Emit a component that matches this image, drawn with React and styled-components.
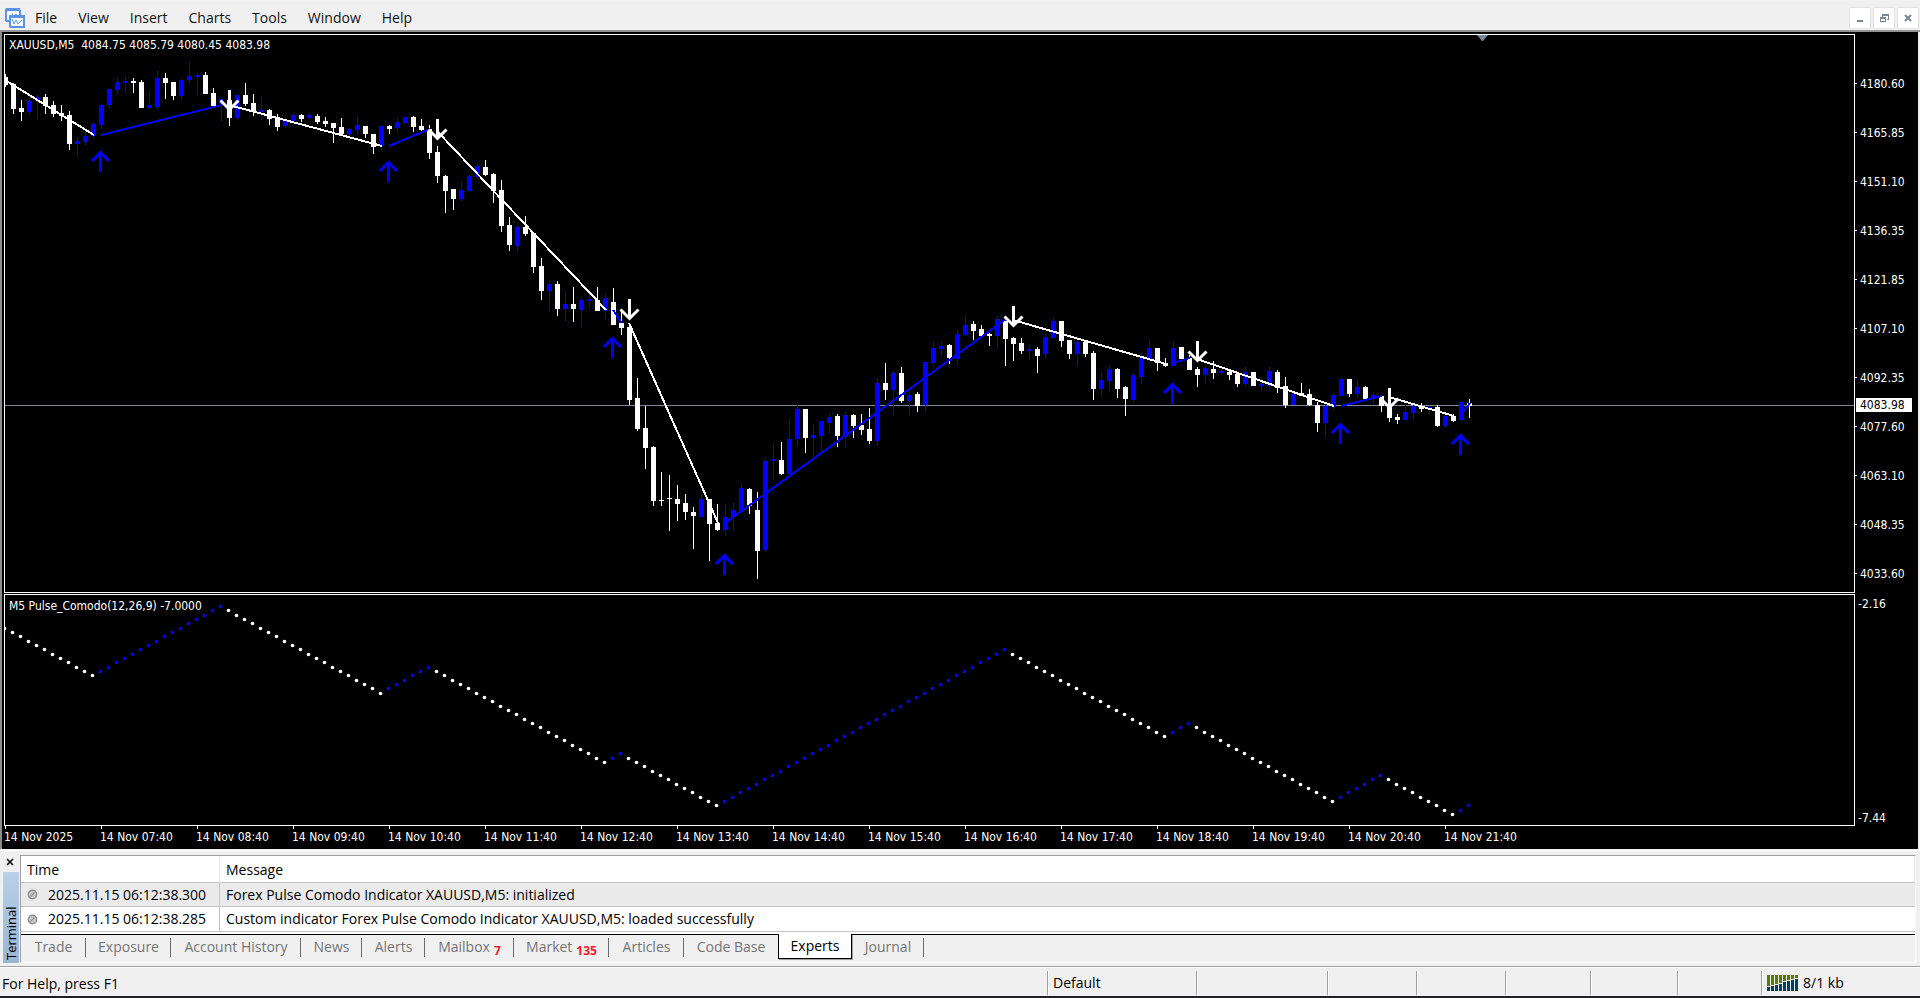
import React from "react";
import styled, { createGlobalStyle, css } from "styled-components";

const UI_FONT = `"Open Sans", "Noto Sans", sans-serif`;
const CHART_FONT = `"DejaVu Sans Condensed", "Noto Sans", sans-serif`;
const BULL = "#0000ff";
const BEAR = "#ffffff";
const SLATE = "#778899";

/* ---------- data ---------- */

const STEP = 8;
const TOP = 35;

// [isBull, high, bodyTop, bodyBottom, low]
const CANDLES = [
  [0,74,77,85,87],[0,83,84,109,114],[0,100,108,112,121],[1,96,101,112,114],[1,95,97,101,120],
  [0,94,97,106,114],[0,101,105,114,117],[0,105,113,116,121],[0,111,115,144,150],[1,137,141,144,157],
  [1,132,136,142,145],[1,122,124,136,138],[1,104,105,125,129],[1,89,89,105,108],[1,78,82,90,94],
  [1,77,81,83,93],[0,78,81,83,93],[0,80,82,108,108],[1,91,105,108,109],[1,71,78,107,109],
  [0,73,78,83,99],[0,82,82,96,100],[1,79,80,96,99],[1,62,76,80,83],[1,73,75,77,95],
  [0,72,75,94,94],[0,88,93,106,106],[1,99,99,104,121],[0,99,100,118,126],[1,95,95,118,120],
  [0,83,95,104,106],[0,94,103,112,116],[1,97,110,112,120],[0,109,110,119,125],[0,114,117,127,131],
  [1,117,121,126,128],[1,113,115,121,124],[0,114,115,119,122],[1,113,115,118,119],[0,114,116,122,124],
  [0,117,121,124,127],[0,123,123,128,143],[0,118,127,134,134],[1,128,129,134,143],[1,117,125,130,135],
  [0,126,126,134,138],[0,134,134,147,154],[1,126,126,146,150],[0,125,126,129,134],[1,118,122,128,133],
  [1,117,117,123,124],[0,116,117,127,132],[0,119,126,130,132],[0,125,129,153,159],[0,146,152,176,183],
  [0,175,176,191,213],[0,189,189,199,210],[1,182,190,199,201],[1,175,176,191,191],[1,164,166,177,177],
  [0,160,167,175,176],[0,173,174,191,203],[0,180,190,226,232],[0,217,225,245,251],[1,226,227,246,251],
  [0,216,227,234,236],[0,232,233,267,273],[0,258,266,291,300],[1,281,284,291,311],[0,281,284,309,316],
  [1,292,304,309,321],[0,287,304,309,322],[1,298,300,310,327],[1,289,299,301,308],[0,287,300,311,311],
  [1,294,298,311,319],[0,288,302,325,325],[0,312,323,328,335],[0,325,327,400,405],[0,378,398,429,431],
  [0,406,428,448,469],[0,446,447,501,506],[0,472,500,501,506],[0,475,498,499,531],[0,485,499,504,521],
  [0,494,503,512,520],[0,507,512,516,549],[1,494,499,517,517],[0,499,499,524,561],[0,504,523,530,531],
  [1,504,517,530,536],[1,503,510,517,530],[1,484,488,512,512],[0,488,489,506,514],[0,492,510,551,579],
  [1,458,461,550,552],[1,443,459,461,479],[0,442,460,474,475],[1,419,439,474,475],[1,405,409,439,446],
  [0,409,409,438,453],[1,424,435,438,457],[1,421,421,436,453],[1,414,417,423,433],[0,414,416,436,447],
  [1,412,415,437,447],[0,414,415,426,438],[0,414,425,430,435],[0,408,429,441,444],[1,378,383,441,446],
  [0,363,383,390,400],[1,371,373,390,415],[0,367,373,401,403],[1,392,395,401,416],[0,392,394,406,412],
  [1,362,362,405,411],[1,342,348,363,366],[1,342,346,349,355],[0,344,345,358,364],[1,330,334,359,365],
  [1,315,325,335,336],[0,321,324,331,340],[0,325,329,336,336],[0,333,334,336,346],[1,316,319,336,348],
  [0,319,321,339,366],[0,337,338,344,361],[0,338,343,351,354],[1,345,349,351,360],[0,347,349,356,373],
  [1,334,337,354,359],[1,318,321,338,338],[0,321,321,341,347],[0,340,340,354,359],[1,336,342,354,366],
  [0,342,342,354,357],[0,351,353,389,400],[1,373,380,389,397],[1,366,369,381,391],[0,368,369,389,398],
  [0,386,387,399,416],[1,373,375,400,402],[1,353,358,377,384],[1,340,348,360,361],[0,348,348,363,371],
  [0,358,363,366,367],[1,342,348,366,366],[0,347,347,359,360],[0,355,358,370,370],[0,367,369,375,387],
  [1,366,368,375,383],[0,361,369,373,379],[1,369,371,373,375],[0,370,372,375,380],[0,373,374,384,387],
  [1,367,372,384,386],[0,372,372,386,386],[1,377,384,386,391],[1,367,371,386,389],[0,370,372,388,393],
  [0,377,386,405,408],[1,392,394,405,405],[0,383,393,396,396],[0,389,394,405,406],[0,402,405,423,432],
  [1,404,406,423,435],[1,394,395,407,410],[1,377,379,396,396],[0,379,379,394,397],[1,380,387,394,398],
  [0,386,387,399,399],[1,392,395,399,403],[0,395,396,406,412],[0,400,406,418,422],[0,414,417,420,424],
  [1,402,412,420,420],[1,404,406,413,419],[0,403,406,409,412],[1,406,407,409,415],[0,405,407,426,427],
  [1,414,416,426,428],[0,414,416,421,422],[1,401,402,420,421],[0,399,403,406,418],
];

// [isBull, fromBar, fromY, toBar, toY]
const TRENDS = [
  [0,0,80,11,135],[1,12,135,27,105],[0,28,105,47,146],[1,48,146,53,129],[0,54,131,75,310],
  [1,76,310,77,323],[0,78,323,89,523],[1,90,523,125,319],[0,126,320,145,364],[1,146,363,148,358],
  [0,149,359,166,406],[1,167,406,172,396],[0,173,397,181,416],[1,182,415,183,403],
];

// [isBull, bar, topY]
const SIGNALS = [
  [1,12,150],[0,28,90],[1,48,160],[0,54,119],[1,76,336],[0,78,299],[1,90,553],
  [0,126,306],[1,146,382],[0,149,341],[1,167,422],[0,173,388],[1,182,433],
];

// bars at which the pulse line turns, with its level there
const PULSE_TURNS = [[0,0],[11,11],[27,-5],[47,15],[53,9],[75,31],[77,29],[89,41],[125,5],[145,25],[148,22],[166,40],[172,34],[181,43],[183,41]];

const PULSE = PULSE_TURNS.slice(1).reduce(
  (dots, [bar, level], i) => {
    const [startBar, startLevel] = PULSE_TURNS[i];
    const dir = Math.sign(level - startLevel);
    for (let b = startBar + 1; b <= bar; b += 1) {
      dots.push({ bar: b, level: startLevel + dir * (b - startBar), bull: dir < 0 });
    }
    return dots;
  },
  [{ bar: 0, level: 0, bull: false }]
);

const PRICES = ["4180.60","4165.85","4151.10","4136.35","4121.85","4107.10","4092.35","4077.60","4063.10","4048.35","4033.60"];
const TIMES = ["14 Nov 2025", ...Array.from({ length: 15 }, (_, i) => `14 Nov ${String(i + 7).padStart(2, "0")}:40`)];
const MENUS = ["File", "View", "Insert", "Charts", "Tools", "Window", "Help"];
const LOGS = [
  ["2025.11.15 06:12:38.300", "Forex Pulse Comodo Indicator XAUUSD,M5: initialized"],
  ["2025.11.15 06:12:38.285", "Custom indicator Forex Pulse Comodo Indicator XAUUSD,M5: loaded successfully"],
];
const TABS = [
  { label: "Trade", width: 65 },
  { label: "Exposure", width: 85 },
  { label: "Account History", width: 130 },
  { label: "News", width: 61 },
  { label: "Alerts", width: 63 },
  { label: "Mailbox", count: 7, width: 89 },
  { label: "Market", count: 135, width: 95 },
  { label: "Articles", width: 75 },
  { label: "Code Base", width: 94 },
  { label: "Experts", width: 74, active: true },
  { label: "Journal", width: 72 },
];
const PANES = [131, 89, 89, 85, 87, 84];

/* ---------- styles ---------- */

const GlobalStyle = createGlobalStyle`
  * { box-sizing: border-box; }
  body { margin: 0; background: #f0f0f0; font-family: ${UI_FONT}; }
  button { font: inherit; margin: 0; padding: 0; border: 0; background: none; }
`;

const Shell = styled.div`
  display: flex;
  flex-direction: column;
  height: 100vh;
  border-bottom: 2px solid #202026;
  background: #f0f0f0;
  color: #000;
  font-size: 14px;
`;

const MenuBar = styled.header`
  display: flex;
  flex: none;
  align-items: center;
  height: 32px;
  padding: 5px 1px 0 5px;
  border-top: 1px solid #f3f3f3;
  border-bottom: 2px solid #949494;
`;

const MenuList = styled.nav`
  display: flex;
  gap: 21px;
  margin-left: 10px;
  line-height: 20px;
`;

const MenuButton = styled.button`
  color: #111;
`;

const WindowButtons = styled.div`
  display: flex;
  gap: 2px;
  margin-left: auto;
`;

const WindowButton = styled.button`
  display: grid;
  place-items: center;
  width: 22px;
  height: 22px;
  border: 1px solid #e6e6e6;
  border-radius: 1px;
  background: #fff;
  color: ${SLATE};
`;

const ChartWindow = styled.main`
  flex: 1;
  display: grid;
  grid-template-columns: minmax(0, 1fr) 63px;
  grid-template-rows: minmax(0, 559fr) minmax(0, 233fr) 23px;
  min-height: 480px;
  margin-right: 2px;
  padding: 2px 0 0 2px;
  border-left: 2px solid #8c8c8c;
  background: #000;
  color: #fff;
  font-family: ${CHART_FONT};
  font-size: 12px;
  line-height: 14px;
`;

const Pane = styled.section`
  position: relative;
  overflow: hidden;
  border: 1px solid #fff;
  margin-top: ${(p) => (p.$second ? 1 : 0)}px;
`;

const PaneTitle = styled.h2`
  position: absolute;
  top: ${(p) => (p.$second ? 4 : 3)}px;
  left: 4px;
  margin: 0;
  font-size: 12px;
  font-weight: 400;
  white-space: pre;
`;

const Plot = styled.svg`
  position: absolute;
  inset: 0;
  width: 100%;
  height: 100%;
`;

const PriceScale = styled.aside`
  position: relative;
  overflow: hidden;
  padding-top: 25px;
`;

const PriceLabel = styled.div`
  display: flex;
  align-items: center;
  gap: 3px;
  height: 49px;

  &::before {
    content: "";
    width: 2px;
    height: 1px;
    background: #fff;
  }
`;

const PriceTag = styled.output`
  position: absolute;
  top: 364px;
  left: 1px;
  width: 56px;
  padding-left: 4px;
  background: #fff;
  color: #000;
`;

const PulseScale = styled.aside`
  display: flex;
  flex-direction: column;
  justify-content: space-between;
  padding: 4px 0 1px 3px;
`;

const TimeScale = styled.footer`
  display: flex;
  grid-column: 1 / -1;
  overflow: hidden;
`;

const TimeLabel = styled.div`
  flex: none;
  width: 96px;
  white-space: nowrap;

  &::before {
    content: "";
    display: block;
    width: 1px;
    height: 3px;
    margin: 0 0 1px 1px;
    background: #fff;
  }
`;

const Terminal = styled.section`
  display: flex;
  flex: none;
  margin-top: 1px;
  padding: 4px 4px 3px 3px;
  border-top: 1px solid #fff;
`;

const TerminalSide = styled.div`
  display: flex;
  flex-direction: column;
  width: 16px;
  margin-right: 1px;
`;

const CloseButton = styled.button`
  display: grid;
  place-items: center;
  width: 14px;
  height: 13px;
  margin-bottom: 4px;
`;

const TerminalTitle = styled.div`
  flex: 1;
  display: flex;
  align-items: center;
  background: linear-gradient(#99b4d1, #b9d1ea);
  writing-mode: vertical-rl;
  transform: rotate(180deg);
  font-size: 13px;
  line-height: 16px;
`;

const TitleText = styled.span`
  margin: 3px auto auto 0;
`;

const TerminalBody = styled.div`
  flex: 1;
  min-width: 0;
  border: 1px solid #a0a0a0;
  border-right-color: #fff;
  border-bottom-color: #fff;
`;

const LogTable = styled.table`
  width: 100%;
  border-collapse: separate;
  border-spacing: 0;
  table-layout: fixed;
  background: #fff;
  text-align: left;
  line-height: 20px;
`;

const HeadCell = styled.th`
  width: ${(p) => p.$width || "auto"};
  height: 27px;
  padding: 2px 6px 0;
  border-right: 1px solid #e5e5e5;
  border-bottom: 1px solid #c4c4c4;
  font-weight: 400;
`;

const LogRow = styled.tr`
  height: ${(p) => (p.$alt ? 24 : 25)}px;
  background: ${(p) => (p.$alt ? "#eaeaea" : "#fff")};
`;

const LogCell = styled.td`
  padding: 0 6px;
  border-bottom: 1px solid #c4c4c4;
  white-space: nowrap;
  ${(p) => p.$time && css`border-right: 1px solid #c4c4c4;`}
`;

const TimeEntry = styled.span`
  display: flex;
  align-items: center;
  gap: 10px;
`;

const TabBar = styled.div`
  display: flex;
  height: 28px;
  border-top: 1px solid #000;
  box-shadow: 0 -2px #fff;
  margin-top: 2px;
`;

const Tab = styled.button`
  position: relative;
  display: flex;
  justify-content: center;
  gap: 4px;
  flex: none;
  width: ${(p) => p.$width}px;
  height: 24px;
  line-height: 24px;
  color: #757575;
  white-space: nowrap;

  ${(p) =>
    p.$active
      ? css`
          height: 25px;
          margin-top: -1px;
          border: 1px solid #000;
          border-top: 0;
          background: #fff;
          box-shadow: 1px 1px #a0a0a0;
          color: #000;
        `
      : css`
          &:not(:has(+ [aria-selected="true"]))::after {
            content: "";
            position: absolute;
            top: 3px;
            right: 0;
            width: 1px;
            height: 19px;
            background: #6c6c6c;
          }
        `}
`;

const Count = styled.span`
  padding-top: 4px;
  color: #f01c28;
  font-size: 12px;
  font-weight: 700;
`;

const StatusBar = styled.footer`
  display: flex;
  flex: none;
  height: 30px;
  padding: 4px 0 1px;
  border-top: 1px solid #a0a0a0;
  box-shadow: inset 0 1px #fff;
  line-height: 26px;
`;

const StatusText = styled.div`
  flex: 1;
  padding-left: 2px;
`;

const StatusPane = styled.div`
  display: flex;
  align-items: center;
  gap: 5px;
  flex: none;
  width: ${(p) => p.$width}px;
  padding-left: 5px;
  border-left: 1px solid #a0a0a0;
  box-shadow: inset 1px 0 #fff;
`;

/* ---------- drawings ---------- */

const Logo = () => (
  <svg width="20" height="20" viewBox="0 0 20 20" aria-hidden="true" shapeRendering="crispEdges">
    <path d="M1 0h14v3H1z M0 1h2v12H0z M14 2h2v5h-2z M2 12h3v2H1v-1z" fill="#5b92e5" />
    <path d="M2 3h12v9H2z" fill="#fff" />
    <path d="M3 7h2v1h2V5h1v5H7 M10 6h2v1h-2z" fill="#6fa0ea" />
    <path d="M5 7h14l1 1v11l-1 1H5l-1-1V8z" fill="#5b92e5" />
    <path d="M6 10h12v8H6z" fill="#fff" />
    <path d="M7 11l2 5 2-4 2 4 4-4" fill="none" stroke="#5b92e5" shapeRendering="auto" />
  </svg>
);

const MinimizeIcon = () => (
  <svg width="12" height="12" aria-hidden="true"><path d="M3 8h6v2H3z" fill="currentColor" /></svg>
);

const RestoreIcon = () => (
  <svg width="12" height="12" aria-hidden="true" shapeRendering="crispEdges">
    <path fillRule="evenodd" fill="currentColor" d="M4 2h7v6H9V7h1V4H5v1H4z M2 5h6v5H2z M3 7v2h4V7z" />
  </svg>
);

const CrossIcon = ({ weight = 2 }) => (
  <svg width="12" height="12" viewBox="0 0 12 12" aria-hidden="true">
    <path d="M3 3l6 6M9 3l-6 6" stroke="currentColor" strokeWidth={weight} />
  </svg>
);

const EntryIcon = () => (
  <svg width="11" height="11" aria-hidden="true">
    <circle cx="5.5" cy="5.5" r="4.2" fill="#c8c8c8" stroke="#8d8d8d" strokeWidth="1.4" />
    <path d="M3.5 7.5l4-4" stroke="#999" strokeWidth="1.4" />
  </svg>
);

const TrafficIcon = () => (
  <svg width="31" height="17" aria-hidden="true" shapeRendering="crispEdges">
    {[11, 10, 9, 8, 6, 5, 4, 3].map((h, i) => (
      <g key={i}>
        <rect x={i * 4} y="0" width="3" height={h} fill="#5a7a00" />
        <rect x={i * 4} y={h + 1} width="3" height={16 - h - 1} fill="#003f5f" />
      </g>
    ))}
  </svg>
);

const tone = (bull) => (bull ? BULL : BEAR);

function PricePlot() {
  return (
    <Plot role="img" aria-label="XAUUSD five minute candles">
      <rect x="0" y={405 - TOP} width="100%" height="1" fill={SLATE} />
      <path d="M1472 0h11l-5 6h-1z" fill={SLATE} />
      <g transform={`translate(0 ${-TOP})`} shapeRendering="crispEdges">
        {CANDLES.map(([bull, high, top, bottom, low], i) => (
          <g key={i} fill={tone(bull)}>
            <rect x={i * STEP} y={high} width="1" height={low - high} />
            <rect x={i * STEP - 2} y={top} width="5" height={bottom - top} />
          </g>
        ))}
        {TRENDS.map(([bull, b1, y1, b2, y2], i) => (
          <line key={i} x1={b1 * STEP} y1={y1} x2={b2 * STEP + 1} y2={y2} stroke={tone(bull)} strokeWidth="2" />
        ))}
      </g>
      {SIGNALS.map(([bull, bar, y], i) => (
        <g key={i} transform={`translate(${bar * STEP} ${y - TOP})`} fill="none" stroke={tone(bull)} strokeWidth="3">
          <path d={bull ? "M-.5 22V2M-9 11L-.5 2.5L8 11" : "M.5 0V20M-8.5 10.5L.5 19.5L9.5 10.5"} />
        </g>
      ))}
    </Plot>
  );
}

function PulsePlot() {
  return (
    <Plot role="img" aria-label="Pulse indicator">
      {PULSE.map(({ bar, level, bull }) => (
        <circle key={bar} cx={bar * STEP - 0.5} cy={33.5 + Math.floor((level * 13) / 3)} r="1.8" fill={tone(bull)} />
      ))}
    </Plot>
  );
}

/* ---------- page ---------- */

export default function App() {
  return (
    <>
      <GlobalStyle />
      <Shell>
        <MenuBar>
          <Logo />
          <MenuList aria-label="Main menu">
            {MENUS.map((m) => <MenuButton key={m} type="button">{m}</MenuButton>)}
          </MenuList>
          <WindowButtons>
            <WindowButton type="button" aria-label="Minimize"><MinimizeIcon /></WindowButton>
            <WindowButton type="button" aria-label="Restore"><RestoreIcon /></WindowButton>
            <WindowButton type="button" aria-label="Close"><CrossIcon /></WindowButton>
          </WindowButtons>
        </MenuBar>

        <ChartWindow>
          <Pane>
            <PricePlot />
            <PaneTitle>{"XAUUSD,M5  4084.75 4085.79 4080.45 4083.98"}</PaneTitle>
          </Pane>
          <PriceScale>
            {PRICES.map((p) => <PriceLabel key={p}>{p}</PriceLabel>)}
            <PriceTag>4083.98</PriceTag>
          </PriceScale>
          <Pane $second>
            <PulsePlot />
            <PaneTitle $second>M5 Pulse_Comodo(12,26,9) -7.0000</PaneTitle>
          </Pane>
          <PulseScale>
            <span>-2.16</span>
            <span>-7.44</span>
          </PulseScale>
          <TimeScale>
            {TIMES.map((t) => <TimeLabel key={t}>{t}</TimeLabel>)}
          </TimeScale>
        </ChartWindow>

        <Terminal>
          <TerminalSide>
            <CloseButton type="button" aria-label="Close terminal"><CrossIcon weight={1.5} /></CloseButton>
            <TerminalTitle><TitleText>Terminal</TitleText></TerminalTitle>
          </TerminalSide>
          <TerminalBody>
            <LogTable>
              <thead>
                <tr>
                  <HeadCell $width="199px">Time</HeadCell>
                  <HeadCell>Message</HeadCell>
                </tr>
              </thead>
              <tbody>
                {LOGS.map(([time, message], i) => (
                  <LogRow key={time} $alt={i % 2 === 0}>
                    <LogCell $time><TimeEntry><EntryIcon />{time}</TimeEntry></LogCell>
                    <LogCell>{message}</LogCell>
                  </LogRow>
                ))}
              </tbody>
            </LogTable>
            <TabBar role="tablist">
              {TABS.map((t) => (
                <Tab key={t.label} type="button" role="tab" aria-selected={!!t.active} $active={t.active} $width={t.width}>
                  {t.label}
                  {t.count && <Count>{t.count}</Count>}
                </Tab>
              ))}
            </TabBar>
          </TerminalBody>
        </Terminal>

        <StatusBar>
          <StatusText>For Help, press F1</StatusText>
          <StatusPane $width={149}>Default</StatusPane>
          {PANES.map((w, i) => <StatusPane key={i} $width={w} />)}
          <StatusPane $width={159}><TrafficIcon />8/1 kb</StatusPane>
        </StatusBar>
      </Shell>
    </>
  );
}
